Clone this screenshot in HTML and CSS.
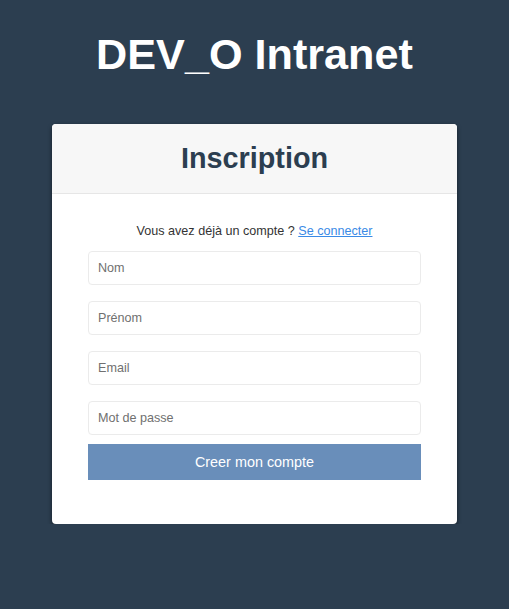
FILE: index.html
```html
<!DOCTYPE html>
<html lang="fr">
<head>
<meta charset="utf-8">
<title>DEV_O Intranet - Inscription</title>
<link rel="stylesheet" href="styles.css">
</head>
<body>
<h1 class="site-title">DEV_O Intranet</h1>
<div class="card">
  <div class="card-header">
    <h2 class="card-title">Inscription</h2>
  </div>
  <form class="card-body">
    <p class="login-hint">Vous avez déjà un compte ? <a href="#" class="login-link">Se connecter</a></p>
    <input class="field" type="text" placeholder="Nom">
    <input class="field" type="text" placeholder="Prénom">
    <input class="field" type="email" placeholder="Email">
    <input class="field" type="password" placeholder="Mot de passe">
    <button class="submit" type="button">Creer mon compte</button>
  </form>
</div>
</body>
</html>
```

FILE: styles.css
```css
html, body {
  margin: 0;
  padding: 0;
}
body {
  background: #2c3e50;
  font-family: "Liberation Sans", Arial, sans-serif;
  color: #333;
  padding-top: 30px;
}
.site-title {
  margin: 0 0 46px;
  text-align: center;
  color: #fff;
  font-size: 43.2px;
  line-height: 48px;
  font-weight: bold;
}
.card {
  width: 405px;
  margin: 0 auto;
  background: #fff;
  border-radius: 4px;
  box-shadow: 0 2px 4px rgba(0, 0, 0, 0.55);
  overflow: hidden;
}
.card-header {
  background: #f7f7f7;
  border-bottom: 1px solid #e6e6e6;
  padding: 18px 0 19px;
  text-align: center;
}
.card-title {
  margin: 0;
  font-size: 28.8px;
  line-height: 32px;
  font-weight: bold;
  color: #2c3e50;
}
.card-body {
  display: flex;
  flex-direction: column;
  padding: 27px 36px 44px;
  margin: 0;
}
.login-hint {
  margin: 0 0 10px;
  text-align: center;
  font-size: 12.6px;
  line-height: 20px;
  color: #333;
}
.login-link {
  color: #3a8ae6;
  text-decoration: underline;
}
.field {
  box-sizing: border-box;
  height: 34px;
  margin: 0 0 16px;
  padding: 0 9px;
  border: 1px solid #ebebeb;
  border-radius: 4px;
  font-family: "Liberation Sans", Arial, sans-serif;
  font-size: 12.6px;
  color: #555;
  background: #fff;
  outline: none;
}
.field:last-of-type {
  margin-bottom: 9px;
}
.field::placeholder {
  color: #707070;
}
.submit {
  height: 36px;
  border: none;
  border-radius: 0;
  background: #698eba;
  color: #fff;
  font-family: "Liberation Sans", Arial, sans-serif;
  font-size: 14.4px;
  cursor: pointer;
}
```
